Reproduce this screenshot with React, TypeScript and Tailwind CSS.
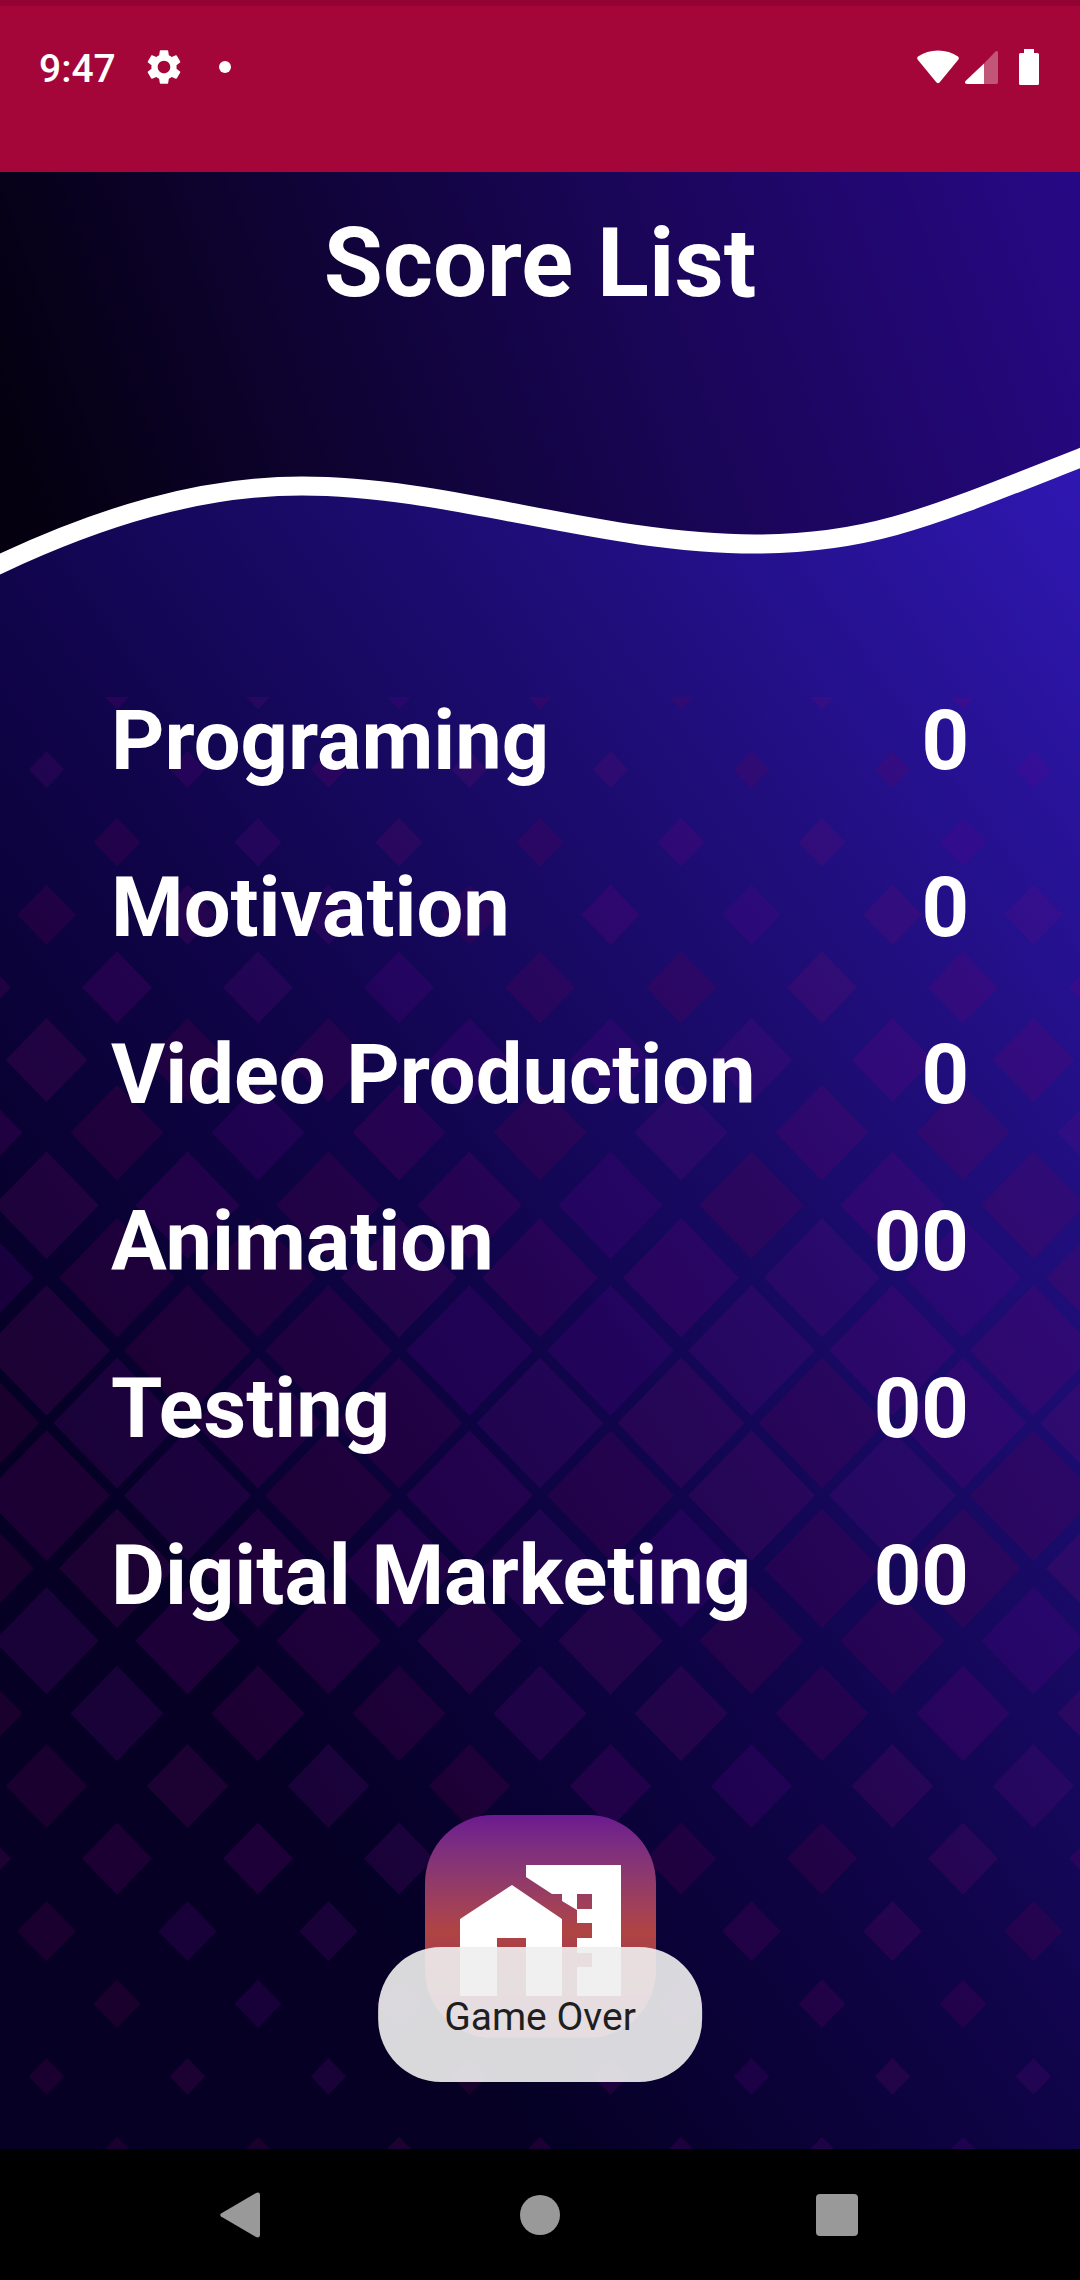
import React from 'react';
import { MdSettings } from 'react-icons/md';

const scores = [
  { subject: 'Programing', score: '0' },
  { subject: 'Motivation', score: '0' },
  { subject: 'Video Production', score: '0' },
  { subject: 'Animation', score: '00' },
  { subject: 'Testing', score: '00' },
  { subject: 'Digital Marketing', score: '00' },
];

const tints = ['#78006e', '#6e0050', '#64008c', '#780082', '#780a6e', '#6e005a', '#6a0a82'];

// Lattice of diamonds that grow toward the middle rows and shrink again.
const diamonds: { key: string; d: string; fill: string }[] = [];
for (let row = 0; row <= 20; row++) {
  const half = Math.min(63.5, 12 + 5.75 * Math.min(row, 20 - row));
  const tall = half * 1.03;
  const cy = 525 + row * 72.6;
  const startX = row % 2 === 1 ? 46.5 : -24;
  for (let col = 0; col < 9; col++) {
    const cx = startX + col * 141;
    const pick = (row * 5 + col * 3 + ((row * col) % 4) + ((row * row) % 5)) % tints.length;
    diamonds.push({
      key: `${row}-${col}`,
      d: `M${cx - half} ${cy}L${cx} ${cy - tall}L${cx + half} ${cy}L${cx} ${cy + tall}Z`,
      fill: tints[pick],
    });
  }
}

function Backdrop() {
  return (
    <svg
      aria-hidden="true"
      viewBox="0 0 1080 1977"
      preserveAspectRatio="none"
      className="absolute inset-0 h-full w-full"
    >
      <defs>
        <linearGradient id="sky" gradientUnits="userSpaceOnUse" x1="60" y1="424" x2="1080" y2="60">
          <stop offset="0" stopColor="#04000f" />
          <stop offset="0.54" stopColor="#170550" />
          <stop offset="1" stopColor="#270884" />
        </linearGradient>
        <linearGradient id="ground" gradientUnits="userSpaceOnUse" x1="-72" y1="1127" x2="1080" y2="298">
          <stop offset="0" stopColor="#050024" />
          <stop offset="0.33" stopColor="#10044a" />
          <stop offset="0.64" stopColor="#1e0d76" />
          <stop offset="1" stopColor="#2f17b2" />
        </linearGradient>
        <clipPath id="lattice">
          <rect x="0" y="525" width="1080" height="1452" />
        </clipPath>
      </defs>
      <rect width="1080" height="1977" fill="url(#ground)" />
      <path
        d="M-20 0V401L0 392C100 345 200 314 302 314C450 314 600 372 755 372C870 372 930 345 1080 286L1100 278V0Z"
        fill="url(#sky)"
      />
      <g clipPath="url(#lattice)" opacity="0.2">
        {diamonds.map((m) => (
          <path key={m.key} d={m.d} fill={m.fill} />
        ))}
      </g>
      <path
        d="M-20 401L0 392C100 345 200 314 302 314C450 314 600 372 755 372C870 372 930 345 1080 286L1100 278"
        fill="none"
        stroke="#fff"
        strokeWidth="19"
      />
    </svg>
  );
}

function StatusBar() {
  return (
    <header className="flex h-[172px] items-start justify-between border-t-[6px] border-[#920333] bg-[#a50639] pr-[41px] pl-[39px] pt-[38px] text-white">
      <div className="flex h-[46px] items-center">
        <span className="pt-[4px] text-[39px] leading-[46px] font-medium">9:47</span>
        <MdSettings className="ml-[27px] size-[42px]" aria-label="Settings" />
        <span className="ml-[34px] size-[12px] rounded-full bg-white" />
      </div>
      <div className="flex h-[46px] items-center">
        <svg viewBox="0 0 42 34" className="h-[34px] w-[42px]" aria-label="Wi-Fi">
          <path
            d="M1 6.5C12-1.5 30-1.5 41 6.5Q42.5 8 41.2 9.8L22.5 32.5Q21 34 19.5 32.5L.8 9.8Q-.5 8 1 6.5Z"
            fill="#fff"
          />
        </svg>
        <svg viewBox="0 0 34 34" className="ml-[6px] h-[34px] w-[34px]" aria-label="Signal">
          <path d="M19 13.5L30.5 1.5Q33 0 33 2.5V32Q33 34 31.500 34H19Z" fill="#fff" fillOpacity="0.32" />
          <path d="M19 13.500V34H2Q-1 33.500 .5 31Z" fill="#fff" />
        </svg>
        <svg viewBox="0 0 20 36" className="ml-[20px] h-[36px] w-[20px]" aria-label="Battery">
          <path d="M5 0H15V4H18.500Q20 4 20 5.500V34.500Q20 36 18.500 36H1.500Q0 36 0 34.500V5.500Q0 4 1.500 4H5Z" fill="#fff" />
        </svg>
      </div>
    </header>
  );
}

function HomeIcon() {
  return (
    <svg viewBox="0 0 161 131" className="h-[131px] w-[161px]" aria-hidden="true">
      <g fill="#fff">
        <path d="M0 54L52 20L102 54V131H66V73H37V131H0Z" />
        <path
          fillRule="evenodd"
          d="M66 0H161V131H117V102H132V88H117V73H132V58H117V45L102 36V29H92L66 12ZM117 29V44H132V29Z"
        />
      </g>
    </svg>
  );
}

function NavBar() {
  return (
    <nav className="flex h-[131px] items-center justify-between bg-black px-[198px]">
      <button type="button" aria-label="Back" className="flex size-[90px] items-center justify-center">
        <svg viewBox="0 0 46 46" className="size-[46px]" aria-hidden="true">
          <path d="M1 21.500L36 1Q40 -.5 40 3V43Q40 46.500 36 45L1 24.500Q-.5 23 1 21.500Z" fill="#999" />
        </svg>
      </button>
      <button type="button" aria-label="Home" className="flex size-[90px] items-center justify-center">
        <span className="size-[40px] rounded-full bg-[#999]" />
      </button>
      <button type="button" aria-label="Recent apps" className="flex size-[90px] items-center justify-center">
        <span className="size-[42px] rounded-[4px] bg-[#999]" />
      </button>
    </nav>
  );
}

export default function App() {
  return (
    <div className="flex min-h-screen flex-col bg-black font-['Roboto',sans-serif]">
      <StatusBar />
      <main className="relative flex-1 overflow-hidden">
        <Backdrop />
        <div className="relative flex flex-col items-center px-[111px] pt-[35px] text-white">
          <h1 className="text-[96px] leading-[112px] font-bold">Score List</h1>
          <table className="mt-[338px] w-full text-[83px] leading-[99px] font-bold">
            <tbody>
              {scores.map((s) => (
                <tr key={s.subject}>
                  <th scope="row" className="py-[34px] text-left">
                    {s.subject}
                  </th>
                  <td className="py-[34px] text-right">{s.score}</td>
                </tr>
              ))}
            </tbody>
          </table>
          <button
            type="button"
            aria-label="Go to home screen"
            className="mt-[156px] flex h-[223px] w-[231px] items-start justify-center rounded-[68px] bg-linear-to-b from-[#6c1990] via-[#b04443] via-52% to-[#8a2a60] pt-[50px]"
          >
            <HomeIcon />
          </button>
        </div>
        <div
          role="status"
          className="absolute bottom-[67px] left-1/2 flex h-[135px] -translate-x-1/2 items-center rounded-[63px] bg-[#eee]/91 px-[66px] pt-[4px] text-[39px] leading-[48px] whitespace-nowrap text-[#1f1f1f]"
        >
          Game Over
        </div>
      </main>
      <NavBar />
    </div>
  );
}
